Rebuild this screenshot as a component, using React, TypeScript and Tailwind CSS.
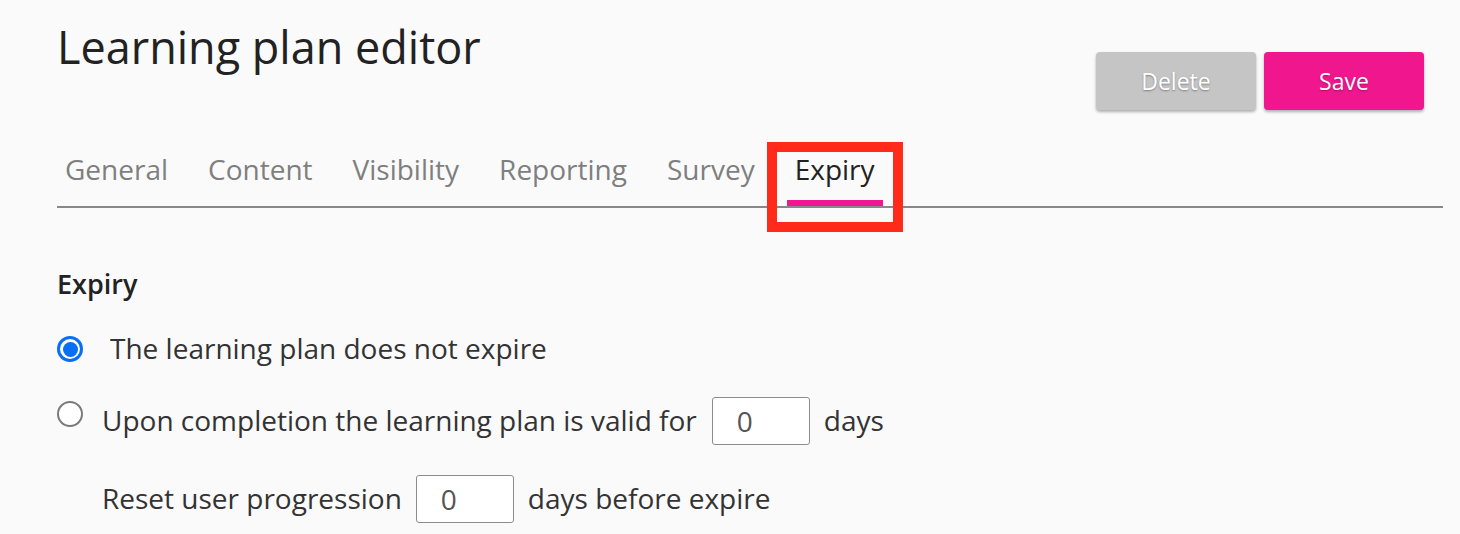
import React from "react";

const tabs = ["General", "Content", "Visibility", "Reporting", "Survey", "Expiry"];

function Radio({ checked }: { checked?: boolean }) {
  return checked ? (
    <span className="flex h-[26px] w-[26px] shrink-0 items-center justify-center rounded-full bg-[#0a6ef5]">
      <span className="flex h-[20px] w-[20px] items-center justify-center rounded-full bg-white">
        <span className="h-[15px] w-[15px] rounded-full bg-[#0a6ef5]" />
      </span>
    </span>
  ) : (
    <span className="h-[26px] w-[26px] shrink-0 rounded-full border-2 border-[#7a7a7a] bg-white" />
  );
}

function NumBox() {
  return (
    <span className="flex h-[48px] w-[98px] shrink-0 items-center rounded-[3px] border border-[#8c8c8c] bg-white pl-[24px] text-[28px] leading-none text-[#555]">
      0
    </span>
  );
}

export default function App() {
  return (
    <div
      className="min-h-screen bg-[#fafafa] pl-[57px] pr-[17px] text-[#333]"
      style={{ fontFamily: '"Open Sans", "Noto Sans", sans-serif' }}
    >
      <div className="flex items-start justify-between">
        <h1 className="mt-[16px] text-[45px] leading-[62px] font-normal text-[#222]">
          Learning plan editor
        </h1>
        <div className="mt-[52px] mr-[19px] flex gap-[8px]">
          <button className="h-[58px] w-[160px] rounded-[4px] bg-[#c5c5c5] text-[23px] text-white shadow-[0_2px_3px_rgba(0,0,0,0.3)] [text-shadow:0_1px_2px_rgba(0,0,0,0.35)]">
            Delete
          </button>
          <button className="h-[58px] w-[160px] rounded-[4px] bg-[#f0168e] text-[23px] text-white shadow-[0_2px_3px_rgba(0,0,0,0.3)] [text-shadow:0_1px_2px_rgba(0,0,0,0.3)]">
            Save
          </button>
        </div>
      </div>

      <div className="mt-[41px] flex gap-[24px] border-b-2 border-[#888]">
        {tabs.map((t) => {
          const active = t === "Expiry";
          return (
            <div key={t} className="relative flex flex-col">
              <span
                className={`px-[8px] text-[28px] leading-[37px] ${active ? "text-[#222]" : "text-[#7f7f7f]"}`}
              >
                {t}
              </span>
              <span className={`mt-[12px] h-[6px] ${active ? "bg-[#f0168e]" : "bg-transparent"}`} />
              {active && (
                <span className="pointer-events-none absolute -top-[9px] -right-[20px] -bottom-[26px] -left-[20px] border-[10px] border-[#ff2a1a]" />
              )}
            </div>
          );
        })}
      </div>

      <h2 className="mt-[58px] text-[27px] leading-[36px] font-semibold text-[#222]">Expiry</h2>

      <div className="mt-[29px] flex h-[36px] items-center text-[28px] leading-[36px]">
        <Radio checked />
        <span className="ml-[27px] -mt-[3px]">The learning plan does not expire</span>
      </div>

      <div className="mt-[30px] flex items-center text-[28px] leading-[36px]">
        <span className="mr-[19px] -mt-[14px] flex">
          <Radio />
        </span>
        <span className="-mt-[3px]">Upon completion the learning plan is valid for</span>
        <span className="ml-[15px]">
          <NumBox />
        </span>
        <span className="ml-[14px] -mt-[3px]">days</span>
      </div>

      <div className="mt-[30px] ml-[45px] flex items-center text-[28px] leading-[36px]">
        <span className="-mt-[3px]">Reset user progression</span>
        <span className="ml-[14px]">
          <NumBox />
        </span>
        <span className="ml-[14px] -mt-[3px]">days before expire</span>
      </div>
    </div>
  );
}
